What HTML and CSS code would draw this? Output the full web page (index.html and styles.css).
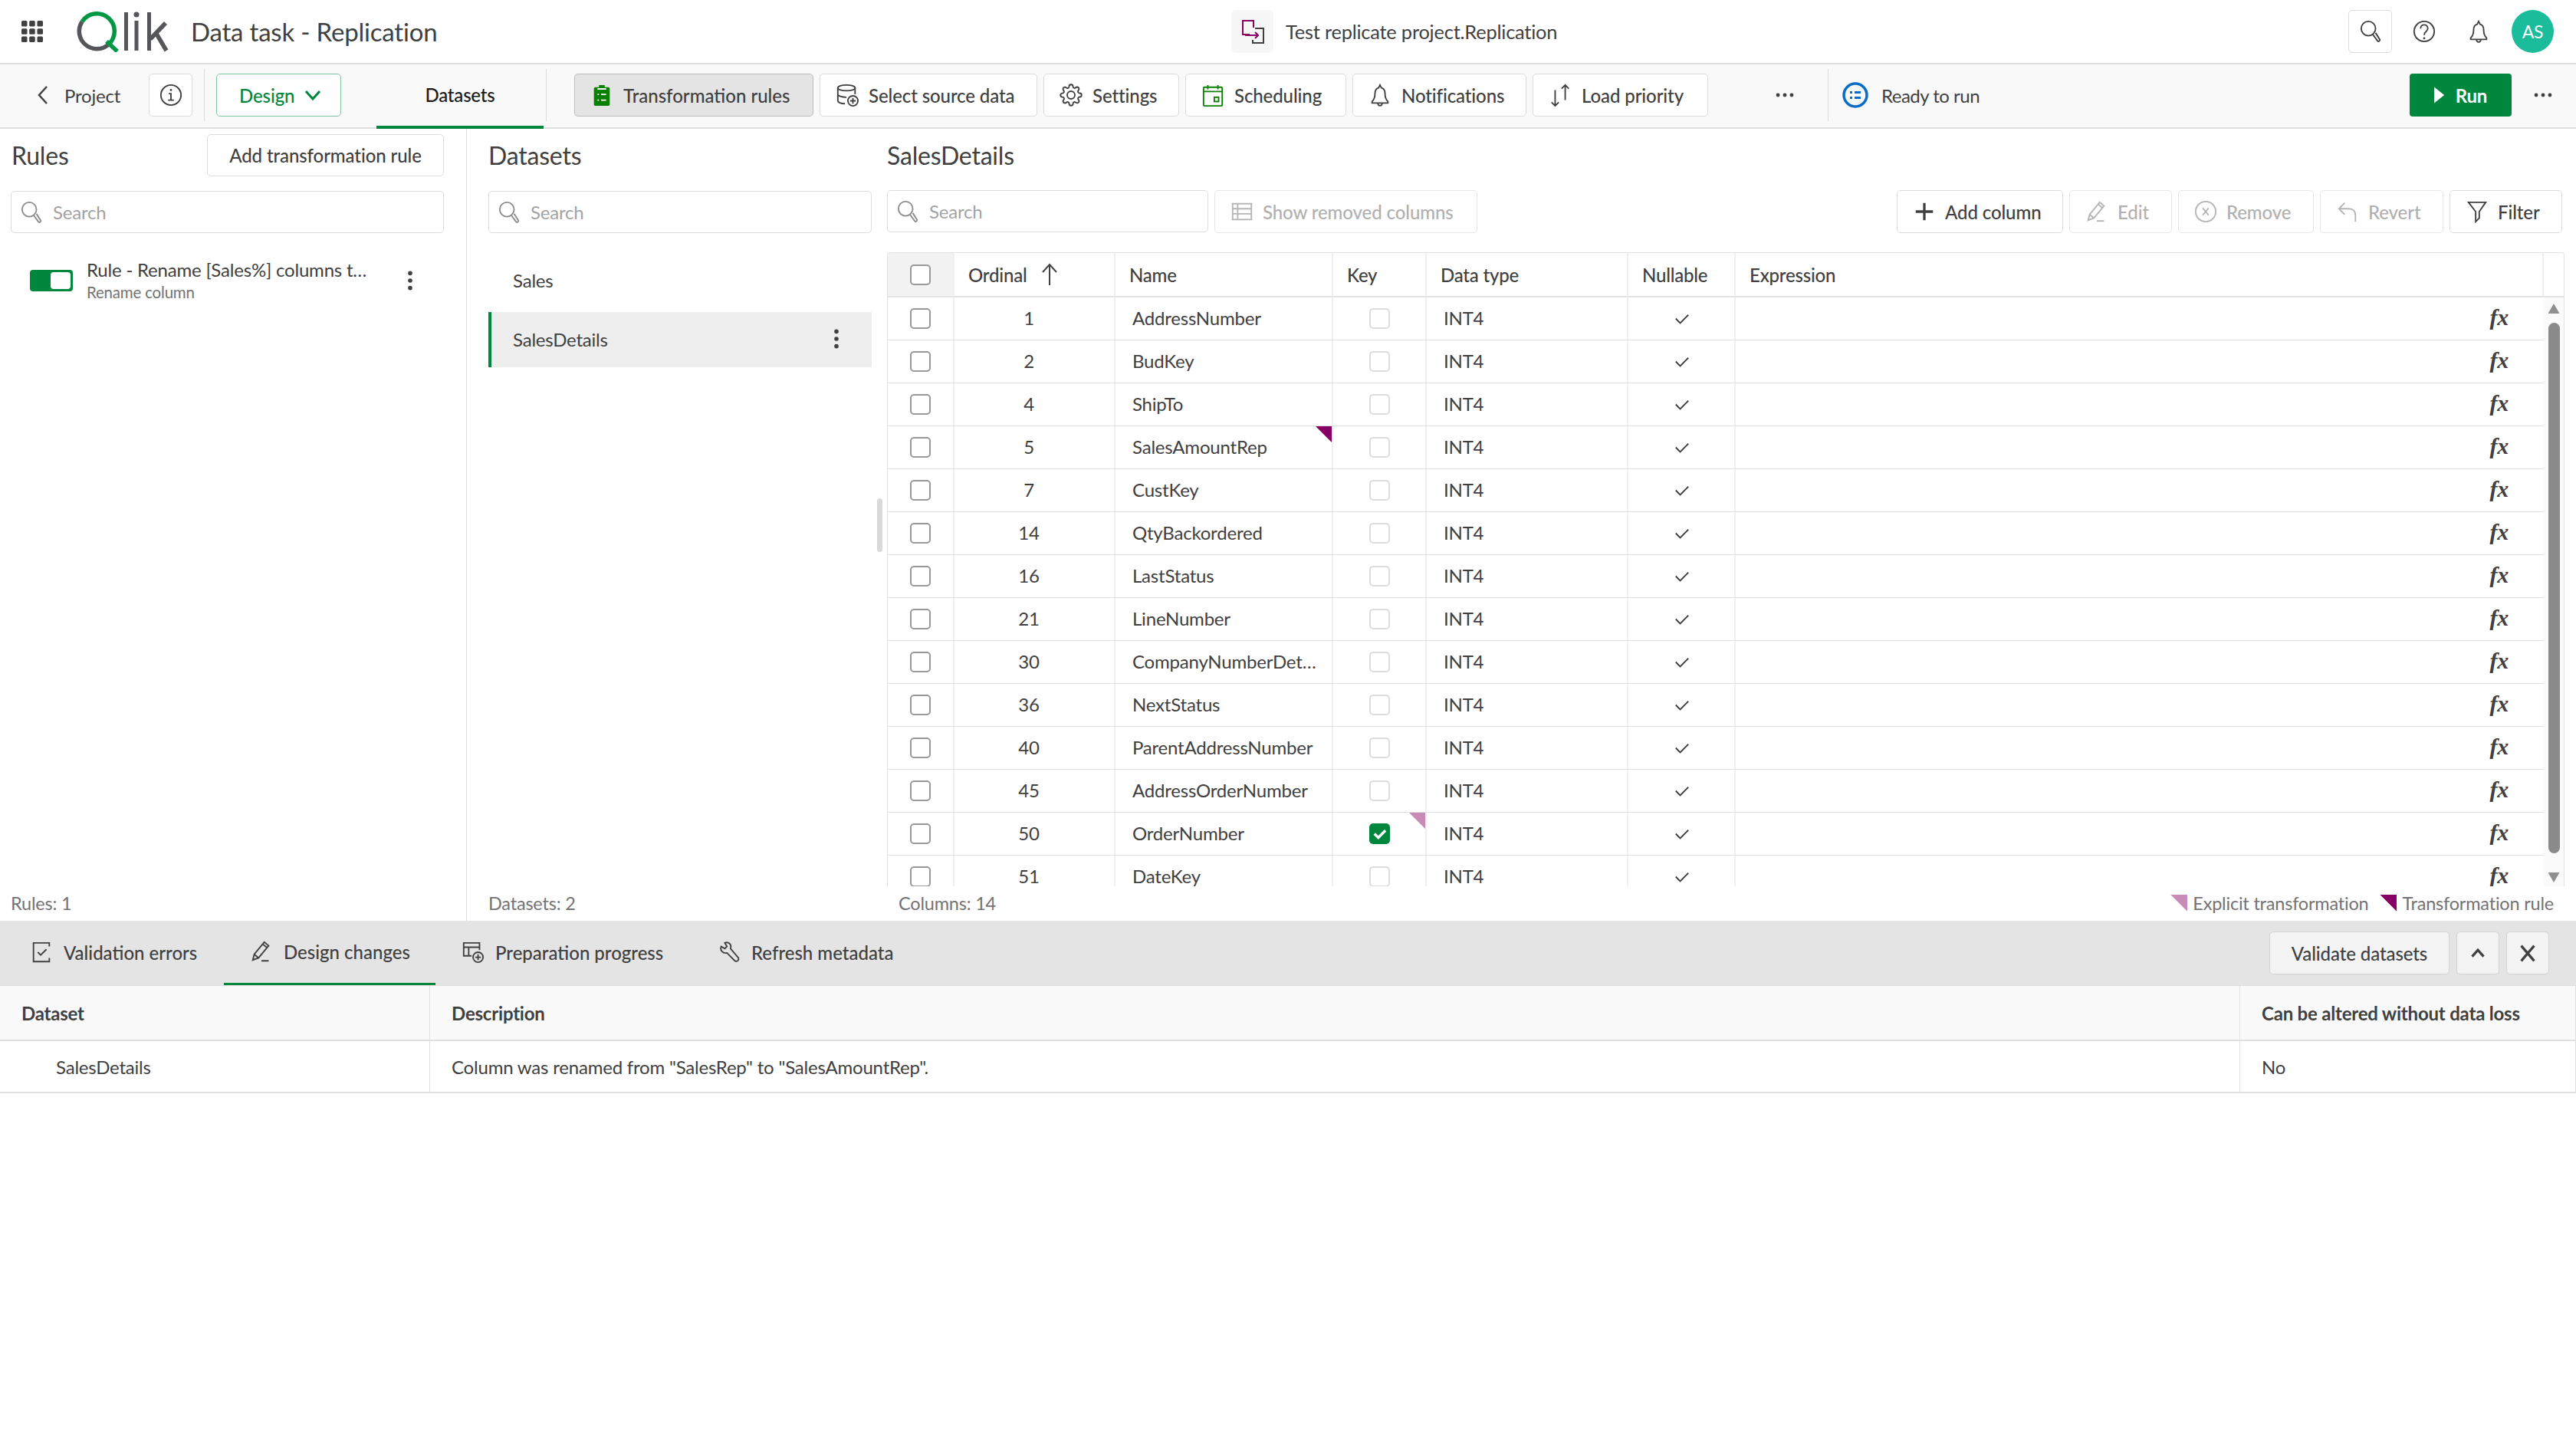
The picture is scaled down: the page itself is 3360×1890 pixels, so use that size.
FILE: index.html
```html
<!DOCTYPE html>
<html>

<head>
    <meta name="viewport" content="width=device-width, initial-scale=1.0" />
    <title>Data task - Replication</title>
    <link rel="stylesheet" href="styles.css">
</head>

<body>
    <!-- Shared icons -->
    <svg class="sprite" xmlns="http://www.w3.org/2000/svg">
        <symbol id="i-search" viewBox="0 0 32 32">
            <circle cx="13" cy="12" r="10" />
            <path d="M19 20l7 9.500c1 1 3 0 3-2l-6-9.500" />
        </symbol>
        <symbol id="i-bell" viewBox="0 0 32 32">
            <path d="M16 2l2 4c4 1 5 4 5 8 0 6 2 9 4 11v2H5v-2c2-2 4-5 4-11 0-4 1-7 5-8z" />
            <path d="M13 27c0 5 6 5 6 0" />
        </symbol>
        <symbol id="i-dots" viewBox="0 0 32 32">
            <circle class="fill" cx="5" cy="16" r="3" />
            <circle class="fill" cx="16" cy="16" r="3" />
            <circle class="fill" cx="27" cy="16" r="3" />
        </symbol>
        <symbol id="i-vdots" viewBox="0 0 32 32">
            <circle class="fill" cx="16" cy="5" r="3.200" />
            <circle class="fill" cx="16" cy="16" r="3.200" />
            <circle class="fill" cx="16" cy="27" r="3.200" />
        </symbol>
        <symbol id="i-pencil" viewBox="0 0 32 32">
            <path d="M4 28l2-8L20 3l6 5-14 17z" />
            <path d="M6 20l6 5M18 6l6 5M16 29h10" />
        </symbol>
        <symbol id="i-check" viewBox="0 0 32 32">
            <path d="M8 16l6 6 11-11" />
        </symbol>
    </svg>

    <header class="topbar">
        <div class="topbar-left">
            <svg class="apps" viewBox="0 0 28 28">
                <rect x="0" y="0" width="7.500" height="7.500" rx="1.500" />
                <rect x="10.200" y="0" width="7.500" height="7.500" rx="1.500" />
                <rect x="20.500" y="0" width="7.500" height="7.500" rx="1.500" />
                <rect x="0" y="10.200" width="7.500" height="7.500" rx="1.500" />
                <rect x="10.200" y="10.200" width="7.500" height="7.500" rx="1.500" />
                <rect x="20.500" y="10.200" width="7.500" height="7.500" rx="1.500" />
                <rect x="0" y="20.500" width="7.500" height="7.500" rx="1.500" />
                <rect x="10.200" y="20.500" width="7.500" height="7.500" rx="1.500" />
                <rect x="20.500" y="20.500" width="7.500" height="7.500" rx="1.500" />
            </svg>
            <svg class="logo" viewBox="100 15 120 54">
                <path d="M107 29.200A23 23 0 0 0 141.800 58.700" fill="none" stroke="#54565a" stroke-width="5.500" />
                <path d="M141.800 58.700A23 23 0 1 0 107 29.200" fill="none" stroke="#009845" stroke-width="5.500" />
                <path d="M139 55l14 13" fill="none" stroke="#009845" stroke-width="5.500" />
                <path d="M162 17h5v50h-5zM175.500 28h5v39h-5zM192 17h5v50h-5z" fill="#54565a" />
                <circle cx="178" cy="20" r="3.500" fill="#54565a" />
                <path d="M196 52l20-21M204 45l13 22" fill="none" stroke="#54565a" stroke-width="5.500" />
            </svg>
            <span class="page-title">Data task - Replication</span>
        </div>
        <div class="topbar-center">
            <span class="project-tile">
                <svg viewBox="0 0 32 32" width="32" height="32" fill="none">
                    <path d="M12 20H3V2h14v9" stroke="#870064" stroke-width="2" />
                    <path d="M19 12h11v19H16v-4" stroke="#404040" stroke-width="2" />
                    <path d="M6 21h17M19 17l4 4-4 4" stroke="#870064" stroke-width="2" />
                </svg>
            </span>
            <span class="project-name">Test replicate project.Replication</span>
        </div>
        <div class="topbar-right">
            <span class="icon-btn bordered"><svg class="ico"><use href="#i-search" /></svg></span>
            <span class="icon-btn">
                <svg class="ico" viewBox="0 0 32 32">
                    <circle cx="16" cy="16" r="14" />
                    <path d="M11 12c0-7 10-7 10 0 0 4-5 4-5 9" />
                    <circle class="fill" cx="16" cy="25.500" r="1.500" />
                </svg>
            </span>
            <span class="icon-btn"><svg class="ico"><use href="#i-bell" /></svg></span>
            <span class="avatar">AS</span>
        </div>
    </header>

    <nav class="toolbar">
        <span class="back">
            <svg class="chev" viewBox="0 0 16 28"><path d="M13 3L3 14l10 11" /></svg>
            Project
        </span>
        <span class="btn info-btn">
            <svg class="ico" viewBox="0 0 32 32">
                <circle cx="16" cy="16" r="14" />
                <path d="M13 14h3v9M12 23h8" />
                <circle class="fill" cx="16" cy="9" r="1.500" />
            </svg>
        </span>
        <span class="tool-sep first"></span>
        <span class="btn design-btn">
            Design
            <svg class="chev-down" viewBox="0 0 22 16"><path d="M2 3l9 10 9-10" /></svg>
        </span>
        <span class="tab datasets-tab">Datasets</span>
        <span class="tool-sep second"></span>

        <span class="btn tool w312 active">
            <svg class="ico" viewBox="0 0 32 32">
                <path class="green-fill" d="M12 2h8v3h5c1 0 2 1 2 2v22c0 1-1 2-2 2H7c-1 0-2-1-2-2V7c0-1 1-2 2-2h5z" />
                <path d="M10 7.500h12M10 15h2M15 15h7M10 23h2M15 23h7" stroke="#fff" fill="none" />
            </svg>
            Transformation rules
        </span>
        <span class="btn tool w284">
            <svg class="ico" viewBox="0 0 32 32">
                <ellipse cx="15" cy="6" rx="12" ry="4" />
                <path d="M3 6v18c0 2 4 4 10 4M27 6v9M3 15c0 2 5 4 12 4" />
                <circle cx="24" cy="24" r="7" />
                <path d="M24 20v8M20 24h8" />
            </svg>
            Select source data
        </span>
        <span class="btn tool w177">
            <svg class="ico" viewBox="0 0 24 24">
                <circle cx="12" cy="12" r="4" stroke-width="1.500" />
                <path stroke-width="1.500" d="M19.400 15a1.650 1.650 0 0 0 .33 1.820l.06.06a2 2 0 0 1 0 2.830 2 2 0 0 1-2.830 0l-.06-.06a1.650 1.650 0 0 0-1.820-.33 1.650 1.650 0 0 0-1 1.510V21a2 2 0 0 1-2 2 2 2 0 0 1-2-2v-.09A1.650 1.650 0 0 0 9 19.400a1.650 1.650 0 0 0-1.820.33l-.06.06a2 2 0 0 1-2.830 0 2 2 0 0 1 0-2.830l.06-.06a1.650 1.650 0 0 0 .33-1.820 1.650 1.650 0 0 0-1.510-1H3a2 2 0 0 1-2-2 2 2 0 0 1 2-2h.09A1.650 1.650 0 0 0 4.600 9a1.650 1.650 0 0 0-.33-1.820l-.06-.06a2 2 0 0 1 0-2.830 2 2 0 0 1 2.830 0l.06.06a1.650 1.650 0 0 0 1.820.33H9a1.650 1.650 0 0 0 1-1.510V3a2 2 0 0 1 2-2 2 2 0 0 1 2 2v.09a1.650 1.650 0 0 0 1 1.510 1.650 1.650 0 0 0 1.820-.33l.06-.06a2 2 0 0 1 2.830 0 2 2 0 0 1 0 2.830l-.06.06a1.650 1.650 0 0 0-.33 1.820V9a1.650 1.650 0 0 0 1.510 1H21a2 2 0 0 1 2 2 2 2 0 0 1-2 2h-.09a1.650 1.650 0 0 0-1.510 1z" />
            </svg>
            Settings
        </span>
        <span class="btn tool w210">
            <svg class="ico green" viewBox="0 0 32 32">
                <rect x="3" y="5" width="26" height="26" rx="1.500" />
                <path d="M3 11h26M9 2v6M23 2v6" />
                <rect x="18" y="19" width="6" height="6" />
            </svg>
            Scheduling
        </span>
        <span class="btn tool w227">
            <svg class="ico"><use href="#i-bell" /></svg>
            Notifications
        </span>
        <span class="btn tool w229">
            <svg class="ico" viewBox="0 0 32 32">
                <path d="M9 9v22M4 26l5 5 5-5M23 2v21M18 7l5-5 5 5" />
            </svg>
            Load priority
        </span>
        <svg class="dots more-tools"><use href="#i-dots" /></svg>
        <span class="tool-sep third"></span>
        <svg class="ready-ico" viewBox="0 0 34 34">
            <circle cx="17" cy="17" r="15" fill="none" stroke="#0a6cc9" stroke-width="3.500" />
            <path d="M10 12h3v3h-3zM16 12h8v3h-8zM10 19h3v3h-3zM16 19h8v3h-8z" fill="#0a6cc9" />
        </svg>
        <span class="ready-text">Ready to run</span>
        <span class="run-btn">
            <svg viewBox="0 0 16 24" width="14" height="24"><path d="M0 0l15 12L0 24z" fill="#fff" /></svg>
            Run
        </span>
        <svg class="dots more-run"><use href="#i-dots" /></svg>
    </nav>

    <main class="panes">
        <section class="pane rules-pane">
            <div class="pane-head">
                <h2>Rules</h2>
                <span class="btn add-rule">Add transformation rule</span>
            </div>
            <div class="search"><svg class="ico soft"><use href="#i-search" /></svg>Search</div>
            <div class="rule-item">
                <span class="toggle"><span></span></span>
                <div class="rule-text">
                    <div class="rule-name">Rule - Rename [Sales%] columns t…</div>
                    <div class="rule-type">Rename column</div>
                </div>
                <svg class="vdots"><use href="#i-vdots" /></svg>
            </div>
            <div class="pane-foot">Rules: 1</div>
        </section>

        <section class="pane datasets-pane">
            <div class="pane-head">
                <h2>Datasets</h2>
            </div>
            <div class="search"><svg class="ico soft"><use href="#i-search" /></svg>Search</div>
            <div class="dataset-list">
                <div class="dataset">Sales</div>
                <div class="dataset selected">SalesDetails<svg class="vdots"><use href="#i-vdots" /></svg></div>
            </div>
            <div class="pane-foot">Datasets: 2</div>
        </section>

        <div class="splitter"><span></span></div>

        <section class="pane columns-pane">
            <div class="pane-head">
                <h2>SalesDetails</h2>
            </div>
            <div class="columns-tools">
                <div class="search column-search"><svg class="ico soft"><use href="#i-search" /></svg>Search</div>
                <span class="btn small disabled w343">
                    <svg class="ico" viewBox="0 0 32 32">
                        <rect x="3" y="5" width="26" height="22" />
                        <path d="M3 12h26M3 19h26M10 5v22" />
                    </svg>
                    Show removed columns
                </span>
                <span class="spacer"></span>
                <span class="btn small w217">
                    <svg class="ico" viewBox="0 0 32 32"><path class="thick" d="M16 4v24M4 16h24" /></svg>
                    Add column
                </span>
                <span class="btn small disabled w134"><svg class="ico"><use href="#i-pencil" /></svg>Edit</span>
                <span class="btn small disabled w177">
                    <svg class="ico" viewBox="0 0 32 32">
                        <circle cx="16" cy="16" r="14" />
                        <path d="M12 11l8 10M20 11l-8 10" />
                    </svg>
                    Remove
                </span>
                <span class="btn small disabled w161">
                    <svg class="ico" viewBox="0 0 32 32"><path d="M12 4L4 12l8 8M4 12h14c6 0 9 4 9 9v9" /></svg>
                    Revert
                </span>
                <span class="btn small w147">
                    <svg class="ico" viewBox="0 0 32 32"><path d="M4 3h24L19 16v9l-5 5V16z" /></svg>
                    Filter
                </span>
            </div>

            <div class="grid">
                <div class="grid-head">
                    <span class="cell sel"><i class="box"></i></span>
                    <span class="cell ordinal-head">Ordinal
                        <svg class="sort" viewBox="0 0 24 32"><path d="M12 30V3M3 13l9-10 9 10" /></svg>
                    </span>
                    <span class="cell">Name</span>
                    <span class="cell">Key</span>
                    <span class="cell">Data type</span>
                    <span class="cell">Nullable</span>
                    <span class="cell">Expression</span>
                    <span class="cell"></span>
                </div>
                <div class="grid-body">
                    <div class="rows">
                        <div class="row"><span class="cell sel"><i class="box"></i></span><span class="cell num">1</span><span class="cell name">AddressNumber</span><span class="cell key"><i class="box light"></i></span><span class="cell type">INT4</span><span class="cell null"><svg class="tick"><use href="#i-check" /></svg></span><span class="cell expr">fx</span></div>
                        <div class="row"><span class="cell sel"><i class="box"></i></span><span class="cell num">2</span><span class="cell name">BudKey</span><span class="cell key"><i class="box light"></i></span><span class="cell type">INT4</span><span class="cell null"><svg class="tick"><use href="#i-check" /></svg></span><span class="cell expr">fx</span></div>
                        <div class="row"><span class="cell sel"><i class="box"></i></span><span class="cell num">4</span><span class="cell name">ShipTo</span><span class="cell key"><i class="box light"></i></span><span class="cell type">INT4</span><span class="cell null"><svg class="tick"><use href="#i-check" /></svg></span><span class="cell expr">fx</span></div>
                        <div class="row"><span class="cell sel"><i class="box"></i></span><span class="cell num">5</span><span class="cell name">SalesAmountRep<b class="mark rule"></b></span><span class="cell key"><i class="box light"></i></span><span class="cell type">INT4</span><span class="cell null"><svg class="tick"><use href="#i-check" /></svg></span><span class="cell expr">fx</span></div>
                        <div class="row"><span class="cell sel"><i class="box"></i></span><span class="cell num">7</span><span class="cell name">CustKey</span><span class="cell key"><i class="box light"></i></span><span class="cell type">INT4</span><span class="cell null"><svg class="tick"><use href="#i-check" /></svg></span><span class="cell expr">fx</span></div>
                        <div class="row"><span class="cell sel"><i class="box"></i></span><span class="cell num">14</span><span class="cell name">QtyBackordered</span><span class="cell key"><i class="box light"></i></span><span class="cell type">INT4</span><span class="cell null"><svg class="tick"><use href="#i-check" /></svg></span><span class="cell expr">fx</span></div>
                        <div class="row"><span class="cell sel"><i class="box"></i></span><span class="cell num">16</span><span class="cell name">LastStatus</span><span class="cell key"><i class="box light"></i></span><span class="cell type">INT4</span><span class="cell null"><svg class="tick"><use href="#i-check" /></svg></span><span class="cell expr">fx</span></div>
                        <div class="row"><span class="cell sel"><i class="box"></i></span><span class="cell num">21</span><span class="cell name">LineNumber</span><span class="cell key"><i class="box light"></i></span><span class="cell type">INT4</span><span class="cell null"><svg class="tick"><use href="#i-check" /></svg></span><span class="cell expr">fx</span></div>
                        <div class="row"><span class="cell sel"><i class="box"></i></span><span class="cell num">30</span><span class="cell name">CompanyNumberDet…</span><span class="cell key"><i class="box light"></i></span><span class="cell type">INT4</span><span class="cell null"><svg class="tick"><use href="#i-check" /></svg></span><span class="cell expr">fx</span></div>
                        <div class="row"><span class="cell sel"><i class="box"></i></span><span class="cell num">36</span><span class="cell name">NextStatus</span><span class="cell key"><i class="box light"></i></span><span class="cell type">INT4</span><span class="cell null"><svg class="tick"><use href="#i-check" /></svg></span><span class="cell expr">fx</span></div>
                        <div class="row"><span class="cell sel"><i class="box"></i></span><span class="cell num">40</span><span class="cell name">ParentAddressNumber</span><span class="cell key"><i class="box light"></i></span><span class="cell type">INT4</span><span class="cell null"><svg class="tick"><use href="#i-check" /></svg></span><span class="cell expr">fx</span></div>
                        <div class="row"><span class="cell sel"><i class="box"></i></span><span class="cell num">45</span><span class="cell name">AddressOrderNumber</span><span class="cell key"><i class="box light"></i></span><span class="cell type">INT4</span><span class="cell null"><svg class="tick"><use href="#i-check" /></svg></span><span class="cell expr">fx</span></div>
                        <div class="row"><span class="cell sel"><i class="box"></i></span><span class="cell num">50</span><span class="cell name">OrderNumber</span><span class="cell key"><i class="box checked"><svg viewBox="0 0 32 32"><path d="M8 16l6 6 11-11" /></svg></i><b class="mark explicit"></b></span><span class="cell type">INT4</span><span class="cell null"><svg class="tick"><use href="#i-check" /></svg></span><span class="cell expr">fx</span></div>
                        <div class="row"><span class="cell sel"><i class="box"></i></span><span class="cell num">51</span><span class="cell name">DateKey</span><span class="cell key"><i class="box light"></i></span><span class="cell type">INT4</span><span class="cell null"><svg class="tick"><use href="#i-check" /></svg></span><span class="cell expr">fx</span></div>
                    </div>
                    <div class="scrollbar">
                        <i class="arrow up"></i>
                        <i class="thumb"></i>
                        <i class="arrow down"></i>
                    </div>
                </div>
            </div>

            <div class="pane-foot columns-foot">
                <span>Columns: 14</span>
                <span class="legend">
                    <b class="swatch explicit"></b>Explicit transformation
                    <b class="swatch rule"></b>Transformation rule
                </span>
            </div>
        </section>
    </main>

    <section class="bottom">
        <div class="bottom-tabs">
            <span class="bottom-tab w287">
                <svg class="ico" viewBox="0 0 32 32">
                    <path d="M27 8V3H5v26h22v-5M11 16l4 4 8-8" />
                </svg>
                Validation errors
            </span>
            <span class="bottom-tab w276 current"><svg class="ico"><use href="#i-pencil" /></svg>Design changes</span>
            <span class="bottom-tab w334">
                <svg class="ico" viewBox="0 0 32 32">
                    <path d="M14 21H3V3h22v10M3 9h22M10 9v12" />
                    <circle cx="23" cy="23" r="7" />
                    <path d="M23 19v8M19 23h8" />
                </svg>
                Preparation progress
            </span>
            <span class="bottom-tab w300">
                <svg class="ico" viewBox="0 0 32 32">
                    <path d="M5 8l5 3 3-3-3-5c5-2 10 2 8 8l11 13c1 3-2 6-5 4L13 17C7 18 3 13 5 8z" />
                </svg>
                Refresh metadata
            </span>
            <span class="spacer"></span>
            <span class="btn flat validate">Validate datasets</span>
            <span class="btn flat square">
                <svg class="ico" viewBox="0 0 32 32"><path class="thick" d="M8 21l8-9 8 9" /></svg>
            </span>
            <span class="btn flat square close">
                <svg class="ico" viewBox="0 0 32 32"><path class="thick" d="M7 6l18 21M25 6L7 27" /></svg>
            </span>
        </div>
        <div class="changes">
            <div class="changes-row head">
                <span>Dataset</span>
                <span>Description</span>
                <span>Can be altered without data loss</span>
            </div>
            <div class="changes-row">
                <span class="indent">SalesDetails</span>
                <span>Column was renamed from "SalesRep" to "SalesAmountRep".</span>
                <span>No</span>
            </div>
        </div>
    </section>
</body>

</html>
```

FILE: styles.css
```css
* {
    box-sizing: border-box;
}

body {
    margin: 0;
    width: 3360px;
    height: 1890px;
    overflow: hidden;
    background: #fff;
    color: #404040;
    font-family: "Lato", "Liberation Sans", sans-serif;
    font-size: 24px;
    letter-spacing: -0.2px;
    white-space: nowrap;
}

.sprite {
    display: none;
}

/* Icons */
.ico {
    flex: none;
    width: 30px;
    height: 30px;
    fill: none;
    stroke: #404040;
    stroke-width: 2;
}

.ico .fill,
.dots,
.vdots {
    fill: #404040;
    stroke: none;
}

.ico.green {
    stroke: #0a8000;
}

.ico .green-fill {
    fill: #0a8000;
    stroke: none;
}

.ico .thick {
    stroke-width: 3.500;
}

.ico.soft {
    stroke: #8c8c8c;
}

.dots {
    width: 26px;
    height: 26px;
}

.vdots {
    width: 28px;
    height: 28px;
}

/* Top bar */
.topbar {
    display: flex;
    align-items: center;
    height: 84px;
    border-bottom: 2px solid #e0e0e0;
}

.topbar-left {
    display: flex;
    align-items: center;
    width: 1606px;
    padding-left: 28px;
}

.apps {
    width: 28px;
    height: 28px;
    fill: #404040;
}

.logo {
    width: 120px;
    height: 54px;
    margin-left: 44px;
}

.page-title {
    margin-left: 29px;
    font-size: 33px;
}

.topbar-center {
    display: flex;
    flex: 1;
    align-items: center;
}

.project-tile {
    display: flex;
    align-items: center;
    justify-content: center;
    width: 55px;
    height: 56px;
    border-radius: 6px;
    background: #f7f7f7;
}

.project-name {
    margin-left: 16px;
    font-size: 25.400px;
}

.topbar-right {
    display: flex;
    align-items: center;
    padding-right: 29px;
}

.icon-btn {
    display: flex;
    align-items: center;
    justify-content: center;
    width: 56px;
    height: 56px;
    margin-right: 15px;
    border-radius: 5px;
}

.icon-btn.bordered {
    width: 57px;
    margin-right: 14px;
    border: 1px solid #ddd;
}

.avatar {
    display: flex;
    align-items: center;
    justify-content: center;
    width: 55px;
    height: 56px;
    border-radius: 50%;
    background: #1abc9c;
    color: #fff;
    font-size: 23px;
}

/* Toolbar */
.toolbar {
    display: flex;
    align-items: center;
    height: 84px;
    padding-bottom: 2px;
    border-bottom: 2px solid #e0e0e0;
    background: #f9f9f9;
}

.back {
    display: flex;
    align-items: center;
    width: 194px;
    padding-left: 48px;
}

.chev {
    width: 16px;
    height: 28px;
    margin-right: 20px;
    fill: none;
    stroke: #404040;
    stroke-width: 2.500;
}

.btn {
    display: flex;
    align-items: center;
    flex: none;
    height: 56px;
    border: 1px solid #ddd;
    border-radius: 5px;
    background: #fff;
    font-weight: 500;
    letter-spacing: -0.1px;
}

.info-btn {
    justify-content: center;
    width: 57px;
}

.tool-sep {
    flex: none;
    width: 1px;
    height: 68px;
    background: #ddd;
}

.tool-sep.first {
    margin: 0 15px;
}

.tool-sep.second {
    margin: 0 36px 0 3px;
}

.tool-sep.third {
    margin: 0 18px 0 43px;
}

.design-btn {
    justify-content: space-between;
    width: 163px;
    padding: 0 25px 0 29px;
    border-color: #7fc3a0;
    color: #00873d;
}

.chev-down {
    width: 22px;
    height: 16px;
    fill: none;
    stroke: #00873d;
    stroke-width: 3;
}

.tab {
    display: flex;
    align-items: center;
    justify-content: center;
    font-weight: 700;
    color: #1a1a1a;
}

.datasets-tab {
    align-self: flex-end;
    width: 218px;
    height: 84px;
    margin-bottom: -4px;
    margin-left: 46px;
    padding-bottom: 2px;
    border-bottom: 4px solid #00873d;
    font-weight: 500;
}

.tool {
    gap: 13px;
    margin-right: 8px;
    padding-left: 20px;
}

.tool.active {
    border-color: #bdbdbd;
    background: #e4e4e4;
    letter-spacing: 0;
}

.w312 { width: 312px; }
.w284 { width: 284px; }
.w210 { width: 210px; }
.w227 { width: 227px; }
.w229 { width: 229px; }

.more-tools {
    margin-left: 79px;
}

.ready-ico {
    width: 34px;
    height: 34px;
}

.ready-text {
    margin-left: 17px;
    letter-spacing: -0.500px;
}

.run-btn {
    display: flex;
    align-items: center;
    justify-content: center;
    gap: 14px;
    width: 133px;
    height: 56px;
    margin-left: auto;
    border-radius: 4px;
    background: #00873d;
    color: #fff;
    font-weight: 700;
}

.more-run {
    margin: 0 30px 0 28px;
}

/* Panes */
.panes {
    display: flex;
    height: 1033px;
}

.pane {
    display: flex;
    flex-direction: column;
    padding-top: 7px;
}

.rules-pane {
    width: 609px;
    padding-right: 29px;
    padding-left: 14px;
    border-right: 1px solid #ddd;
}

.rules-pane h2 {
    margin-left: 1px;
}

.datasets-pane {
    width: 528px;
    padding-left: 28px;
}

.splitter {
    display: flex;
    align-items: center;
    justify-content: center;
    width: 20px;
}

.splitter span {
    width: 7px;
    height: 70px;
    border-radius: 4px;
    background: #d9d9d9;
}

.columns-pane {
    width: 2188px;
}

.pane-head {
    display: flex;
    align-items: center;
    justify-content: space-between;
    height: 55px;
    margin-bottom: 19px;
}

h2 {
    margin: 0;
    font-size: 32px;
    font-weight: 400;
}

.search {
    display: flex;
    align-items: center;
    gap: 13px;
    flex: none;
    height: 55px;
    padding-left: 11px;
    border: 1px solid #ddd;
    border-radius: 5px;
    color: #a3a3a3;
}

.add-rule {
    justify-content: center;
    width: 309px;
    height: 55px;
}

.rule-item {
    display: flex;
    align-items: center;
    height: 64px;
    margin-top: 30px;
    padding-left: 25px;
}

.toggle {
    display: flex;
    justify-content: flex-end;
    width: 56px;
    height: 28px;
    padding: 3px;
    border-radius: 4px;
    background: #00873d;
}

.toggle span {
    width: 26px;
    border-radius: 4px;
    background: #fff;
}

.rule-text {
    width: 408px;
    margin-left: 18px;
}

.rule-name {
    line-height: 30px;
}

.rule-type {
    color: #737373;
    font-size: 20.500px;
    line-height: 28px;
}

.pane-foot {
    display: flex;
    align-items: center;
    flex: none;
    height: 44px;
    margin-top: auto;
    margin-bottom: 1px;
    color: #737373;
    font-size: 23.500px;
}

.dataset-list {
    margin-top: 26px;
}

.dataset {
    display: flex;
    align-items: center;
    justify-content: space-between;
    height: 72px;
    margin-bottom: 5px;
    padding: 0 32px 2px;
}

.dataset.selected {
    padding-left: 28px;
    border-left: 4px solid #00873d;
    background: #eee;
}

/* Columns toolbar */
.columns-tools {
    display: flex;
    gap: 8px;
    flex: none;
}

.column-search {
    width: 419px;
}

.spacer {
    flex: 1;
}

.small {
    gap: 12px;
    padding-left: 20px;
}

.disabled {
    border-color: #e6e6e6;
    color: #b0b0b0;
}

.disabled .ico {
    stroke: #b5b5b5;
}

.w343 { width: 343px; }
.w217 { width: 217px; }
.w134 { width: 134px; }
.w177 { width: 177px; }
.w161 { width: 161px; }
.w147 { width: 147px; margin-right: 3px; }

/* Columns grid */
.grid {
    flex: none;
    height: 827px;
    margin-top: 25px;
    overflow: hidden;
    border: solid #e3e3e3;
    border-width: 1px 1px 0;
    border-radius: 4px 4px 0 0;
}

.grid-head {
    display: grid;
    grid-template-columns: 87px 210px 284px 122px 263px 140px 1054px 26px;
    height: 58px;
    border-bottom: 2px solid #e3e3e3;
    font-weight: 500;
}

.grid-head .cell {
    padding-left: 18px;
}

.grid-head .sel {
    padding-left: 0;
    background: #f2f2f2;
}

.grid-head .cell:last-child {
    border-right: 0;
}

.ordinal-head {
    gap: 18px;
}

.sort {
    width: 24px;
    height: 32px;
    fill: none;
    stroke: #404040;
    stroke-width: 2;
}

.grid-body {
    display: flex;
    height: 768px;
}

.rows {
    width: 2160px;
}

.row {
    display: grid;
    grid-template-columns: 87px 210px 284px 122px 263px 140px 1054px;
    height: 56px;
    border-bottom: 1px solid #e0e0e0;
}

.cell {
    position: relative;
    display: flex;
    align-items: center;
    border-right: 2px solid #efefef;
}

.row .cell {
    line-height: 24px;
}

.row .cell:last-child {
    border-right: 0;
}

.sel,
.key,
.null {
    justify-content: center;
}

.num {
    justify-content: center;
    padding-right: 14px;
    padding-bottom: 1px;
}

.name {
    padding-bottom: 1px;
    padding-left: 22px;
}

.type {
    padding-bottom: 1px;
    padding-left: 22px;
}

.expr {
    justify-content: flex-end;
    padding-right: 46px;
    padding-bottom: 4px;
    font-family: "Liberation Serif", serif;
    font-size: 30px;
    font-style: italic;
    font-weight: 700;
}

.box {
    display: block;
    width: 27px;
    height: 27px;
    border: 2px solid #999;
    border-radius: 5px;
    background: #fff;
}

.box.light {
    border-color: #ddd;
}

.box.checked {
    border: 0;
    background: #00873d;
}

.box svg {
    display: block;
    fill: none;
    stroke: #fff;
    stroke-width: 4;
}

.tick {
    width: 31px;
    height: 31px;
    fill: none;
    stroke: #404040;
    stroke-width: 2;
}

.mark {
    position: absolute;
    top: 0;
    right: 0;
    width: 21px;
    height: 21px;
    clip-path: polygon(0 0, 100% 0, 100% 100%);
}

.rule {
    background: #870064;
}

.explicit {
    background: #c98cb8;
}

.scrollbar {
    display: flex;
    flex-direction: column;
    align-items: center;
    width: 26px;
    height: 100%;
    background: #fafafa;
}

.arrow {
    width: 15px;
    height: 13px;
}

.arrow.up {
    margin-top: 8px;
    clip-path: polygon(50% 0, 100% 100%, 0 100%);
    background: #8f8f8f;
}

.arrow.down {
    margin-top: 25px;
    clip-path: polygon(0 0, 100% 0, 50% 100%);
    background: #8f8f8f;
}

.thumb {
    width: 15px;
    height: 692px;
    margin-top: 12px;
    border-radius: 8px;
    background: #8a8a8a;
}

.columns-foot {
    justify-content: space-between;
    padding: 0 14px 0 15px;
}

.legend {
    display: flex;
    align-items: center;
}

.swatch {
    width: 22px;
    height: 22px;
    margin: 0 7px 0 15px;
    clip-path: polygon(0 0, 100% 0, 100% 100%);
}

/* Bottom panel */
.bottom-tabs {
    display: flex;
    align-items: center;
    height: 84px;
    padding-left: 5px;
    padding-right: 35px;
    background: #e4e4e4;
}

.bottom-tab {
    display: flex;
    align-items: center;
    gap: 14px;
    flex: none;
    height: 84px;
    padding-bottom: 2px;
    padding-left: 34px;
    font-weight: 500;
    letter-spacing: 0;
}

.bottom-tab.current {
    padding-top: 1px;
    border-bottom: 3px solid #00873d;
}

.w287 { width: 287px; }
.w276 { width: 276px; }
.w334 { width: 334px; }
.w300 { width: 300px; }

.flat {
    margin-left: 9px;
    border-color: #d4d4d4;
    background: #f3f3f3;
}

.validate {
    justify-content: center;
    width: 235px;
}

.square {
    justify-content: center;
    width: 56px;
}

.changes-row {
    display: grid;
    grid-template-columns: 561px 2361px 438px;
    height: 68px;
    border-bottom: 2px solid #e0e0e0;
}

.changes-row span {
    display: flex;
    align-items: center;
    padding-left: 28px;
    border-right: 1px solid #e0e0e0;
}

.changes-row.head {
    height: 73px;
    border-top: 1px solid #e0e0e0;
    background: #f9f9f9;
    font-weight: 700;
}

.changes-row .indent {
    padding-left: 73px;
}
```
